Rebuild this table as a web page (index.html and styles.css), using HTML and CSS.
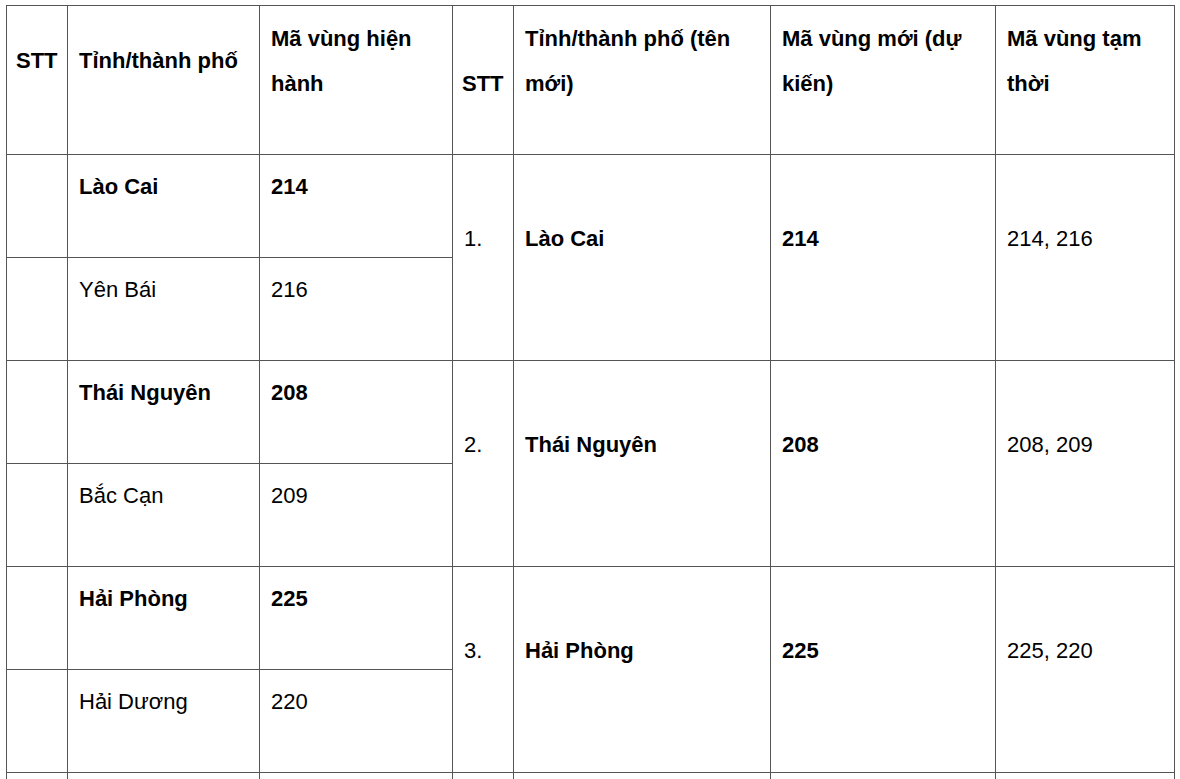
FILE: index.html
```html
<!DOCTYPE html>
<html lang="vi">
<head>
<meta charset="utf-8">
<title>Mã vùng</title>
<link rel="stylesheet" href="styles.css">
</head>
<body>
<table class="codes">
  <colgroup>
    <col class="c1"><col class="c2"><col class="c3"><col class="c4"><col class="c5"><col class="c6"><col class="c7">
  </colgroup>
  <thead>
    <tr class="head">
      <th class="mid">STT</th>
      <th class="mid">Tỉnh/thành phố</th>
      <th>Mã vùng hiện hành</th>
      <th class="low">STT</th>
      <th>Tỉnh/thành phố (tên mới)</th>
      <th>Mã vùng mới (dự kiến)</th>
      <th>Mã vùng tạm thời</th>
    </tr>
  </thead>
  <tbody>
    <tr class="r">
      <td></td>
      <td><b>Lào Cai</b></td>
      <td><b>214</b></td>
      <td rowspan="2" class="merged">1.</td>
      <td rowspan="2" class="merged"><b>Lào Cai</b></td>
      <td rowspan="2" class="merged"><b>214</b></td>
      <td rowspan="2" class="merged">214, 216</td>
    </tr>
    <tr class="r">
      <td></td>
      <td>Yên Bái</td>
      <td>216</td>
    </tr>
    <tr class="r">
      <td></td>
      <td><b>Thái Nguyên</b></td>
      <td><b>208</b></td>
      <td rowspan="2" class="merged">2.</td>
      <td rowspan="2" class="merged"><b>Thái Nguyên</b></td>
      <td rowspan="2" class="merged"><b>208</b></td>
      <td rowspan="2" class="merged">208, 209</td>
    </tr>
    <tr class="r">
      <td></td>
      <td>Bắc Cạn</td>
      <td>209</td>
    </tr>
    <tr class="r">
      <td></td>
      <td><b>Hải Phòng</b></td>
      <td><b>225</b></td>
      <td rowspan="2" class="merged">3.</td>
      <td rowspan="2" class="merged"><b>Hải Phòng</b></td>
      <td rowspan="2" class="merged"><b>225</b></td>
      <td rowspan="2" class="merged">225, 220</td>
    </tr>
    <tr class="r">
      <td></td>
      <td>Hải Dương</td>
      <td>220</td>
    </tr>
    <tr class="r">
      <td></td>
      <td></td>
      <td></td>
      <td rowspan="2" class="merged"></td>
      <td rowspan="2" class="merged"></td>
      <td rowspan="2" class="merged"></td>
      <td rowspan="2" class="merged"></td>
    </tr>
    <tr class="r">
      <td></td>
      <td></td>
      <td></td>
    </tr>
  </tbody>
</table>
</body>
</html>
```

FILE: styles.css
```css
html, body {
  margin: 0;
  padding: 0;
  background: #ffffff;
}

body {
  padding: 5px 0 0 6px;
  font-family: "Liberation Sans", Arial, sans-serif;
  font-size: 22px;
  color: #000000;
}

.codes {
  border-collapse: collapse;
  table-layout: fixed;
  width: 1169px;
}

.c1 { width: 61px; }
.c2 { width: 192px; }
.c3 { width: 193px; }
.c4 { width: 61px; }
.c5 { width: 257px; }
.c6 { width: 225px; }
.c7 { width: 179px; }

.codes th,
.codes td {
  border: 1px solid #555555;
  padding: 10px 8px 0 11px;
  vertical-align: top;
  text-align: left;
  line-height: 45px;
  font-weight: normal;
}

.codes th {
  font-weight: bold;
}

.head {
  height: 149px;
}

.codes th.mid {
  padding-top: 32px;
}

.codes th:first-child {
  padding-left: 9px;
  padding-right: 4px;
}

.codes th.low {
  padding-top: 55px;
  padding-left: 9px;
  padding-right: 2px;
}

.r {
  height: 103px;
}

.codes td {
  padding-top: 9px;
}

.codes td.merged {
  padding-top: 61px;
}

b {
  font-weight: bold;
}
```
